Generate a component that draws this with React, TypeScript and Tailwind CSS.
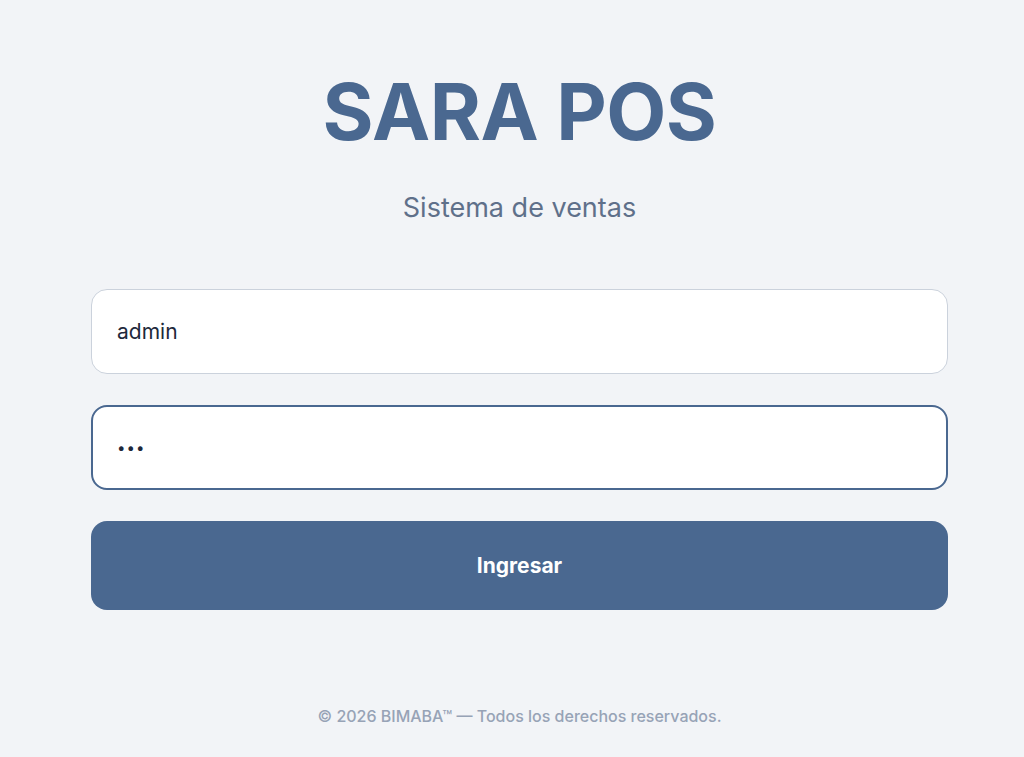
import { useState } from 'react'

export default function App() {
  const [user, setUser] = useState('admin')
  const [pass, setPass] = useState('123')

  return (
    <main
      className="min-h-screen w-full bg-[#f2f4f7] flex flex-col items-center pl-[15px]"
      style={{ fontFamily: 'Inter, "Noto Sans", sans-serif' }}
    >
      {/* Marca */}
      <h1 className="mt-[64px] text-[78px] leading-[96px] font-bold text-[#4a6890] tracking-[-0.5px]">
        SARA POS
      </h1>
      <p className="mt-[31px] text-[27px] leading-[34px] text-[#5f708a]">Sistema de ventas</p>

      {/* Formulario */}
      <form className="w-[857px] mt-[64px] flex flex-col gap-[31px]" onSubmit={(e) => e.preventDefault()}>
        <input
          value={user}
          onChange={(e) => setUser(e.target.value)}
          className="h-[85px] w-full rounded-2xl border border-[#cbd2dc] bg-white px-[25px] text-[21px] text-[#1e293b] outline-none"
        />
        <input
          type="password"
          value={pass}
          onChange={(e) => setPass(e.target.value)}
          className="h-[85px] w-full rounded-2xl border-2 border-[#4a6890] bg-white px-[24px] text-[15px] tracking-[1px] text-[#1e293b] outline-none"
        />
        <button
          type="submit"
          className="h-[89px] w-full rounded-2xl bg-[#4a6890] text-white text-[21px] font-bold"
        >
          Ingresar
        </button>
      </form>

      <p className="mt-[94px] text-[16px] font-medium text-[#97a3b6]">© 2026 BIMABA™ — Todos los derechos reservados.</p>
    </main>
  )
}
